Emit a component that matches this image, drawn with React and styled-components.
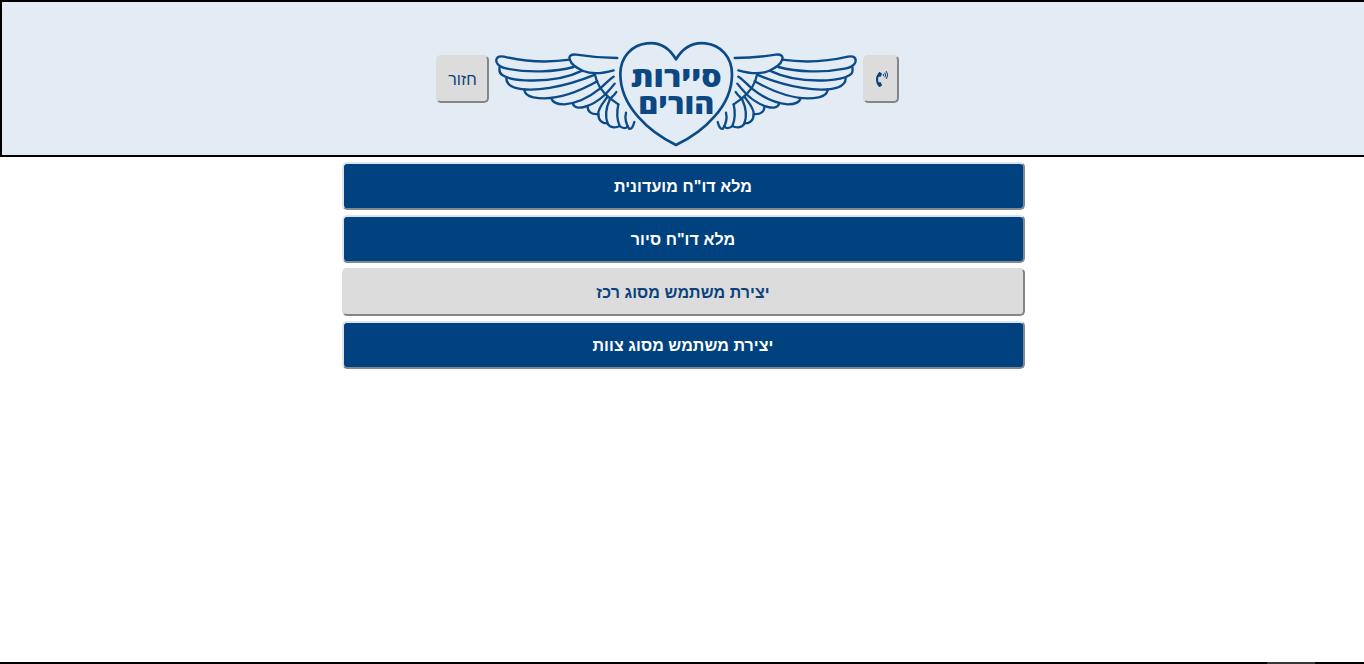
import React from "react";
import styled, { createGlobalStyle } from "styled-components";
import { FaPhoneVolume } from "react-icons/fa";

const GlobalStyle = createGlobalStyle`
  body {
    margin: 0;
    background: #fff;
    overflow: hidden;
    font-family: "Liberation Sans", Arial, sans-serif;
  }
`;

const Page = styled.div`
  display: flex;
  flex-direction: column;
  box-sizing: border-box;
  height: 664px;
`;

const Header = styled.header`
  display: flex;
  align-items: flex-start;
  justify-content: center;
  gap: 7px;
  box-sizing: border-box;
  height: 157px;
  padding: 39px 31px 0 0;
  background: #e3ecf4;
  border: 2px solid #000;
  border-right: 0;
`;

const Button = styled.button`
  box-sizing: border-box;
  height: 48px;
  padding: 2px 0 0;
  border: 2px solid;
  border-color: ${(p) => (p.$muted ? "#dcdcdc #858585 #858585 #dcdcdc" : "#dce5ec #838990 #838990 #dce5ec")};
  border-radius: 5px;
  background: ${(p) => (p.$muted ? "#dcdcdc" : "#00427f")};
  color: ${(p) => (p.$muted ? "#0b427c" : "#fff")};
  font-family: inherit;
  font-size: 16px;
  font-weight: 700;
  letter-spacing: 0.08px;
`;

const HeaderButton = styled(Button)`
  display: flex;
  align-items: center;
  justify-content: center;
  width: ${(p) => p.$width}px;
  margin-top: 14px;
  padding: ${(p) => (p.$icon ? "0 0 0 1px" : "2px 0 0")};
  font-weight: 400;
`;

const LogoArt = styled.svg`
  display: block;
  width: 360px;
  height: 107px;
  flex: none;
  overflow: visible;
`;

const Actions = styled.main`
  display: flex;
  flex-direction: column;
  align-self: center;
  gap: 5px;
  flex: 1;
  width: 683px;
  padding: 5px 0 0 1px;
  margin-left: 1px;
  direction: ltr;
  box-sizing: border-box;
  width: 684px;
`;

const Footer = styled.footer`
  height: 2px;
  background: linear-gradient(to right, #000 1267px, #343837 1267px 1315px, #000 1315px);
`;

function Wing(props) {
  return (
    <g {...props}>
      <path d="M382 69 C337 69 296 65 259 59 C243 57 236 63 239 73 C245 92 263 99 280 108 C307 119 343 114 371 106" />
      <path d="M240 74 C184 82 110 81 42 65 C24 61 16 70 20 82 C24 93 37 98 51 101 C117 114 195 111 251 96" />
      <path d="M29 95 C27 105 29 116 38 121 C54 131 80 135 105 136 C168 139 230 130 277 107" />
      <path d="M49 130 C49 142 58 152 72 157 C125 174 223 157 315 119" />
      <path d="M103 164 C104 177 116 184 130 187 C191 199 265 171 322 139" />
      <path d="M184 190 C188 204 205 208 223 208 C264 205 300 185 330 161 C347 146 357 133 371 125" />
      <path d="M249 206 C251 219 268 219 282 216 C309 209 329 194 344 180 C360 164 368 154 374 146" />
      <path d="M315 119 C320 149 339 173 360 190 L385 208" />
      <path d="M293 214 C292 229 304 240 325 237 C323 222 338 205 352 186" />
      <path d="M325 237 C325 256 336 266 353 265 C345 245 348 218 360 192 C368 184 375 178 379 171" />
      <path d="M353 265 C358 278 376 280 389 273 C380 253 380 231 385 208" />
      <path d="M389 273 C396 280 406 281 413 275" />
      <path d="M408 233 C404 249 408 266 417 281 C425 284 429 275 433 261" />
    </g>
  );
}

function Logo() {
  return (
    <LogoArt viewBox="18 18 1080 321" role="img">
      <g fill="none" stroke="#0b4b89" strokeWidth="7" strokeLinecap="round" strokeLinejoin="round">
        <Wing />
        <Wing transform="matrix(-1 0 0 1 1116 0)" />
        <path
          strokeWidth="8"
          d="M558 73 C535 33 502 21 470 25 C424 30 391 67 391 117 C391 167 414 211 444 245 C475 281 517 310 558 330 C600 310 642 281 673 245 C704 211 726 167 726 117 C726 67 693 30 647 25 C613 21 581 34 558 73 Z"
        />
      </g>
      <g
        fill="#0b4783"
        fontFamily='"Open Sans", "Liberation Sans", sans-serif'
        fontSize="85"
        fontWeight="800"
        textAnchor="middle"
        direction="rtl"
      >
        <text x="559" y="157" textLength="272" lengthAdjust="spacingAndGlyphs">סיירות</text>
        <text x="559" y="236" textLength="228" lengthAdjust="spacingAndGlyphs">הורים</text>
      </g>
    </LogoArt>
  );
}

const ACTIONS = [
  { label: 'מלא דו"ח מועדונית' },
  { label: 'מלא דו"ח סיור' },
  { label: "יצירת משתמש מסוג רכז", muted: true },
  { label: "יצירת משתמש מסוג צוות" },
];

export default function App() {
  return (
    <Page dir="rtl">
      <GlobalStyle />
      <Header dir="ltr">
        <HeaderButton $muted $width={53}>חזור</HeaderButton>
        <Logo />
        <HeaderButton $muted $icon $width={36}>
          <FaPhoneVolume size={16} />
        </HeaderButton>
      </Header>
      <Actions>
        {ACTIONS.map((a) => (
          <Button key={a.label} $muted={a.muted} dir="rtl">
            {a.label}
          </Button>
        ))}
      </Actions>
      <Footer />
    </Page>
  );
}
